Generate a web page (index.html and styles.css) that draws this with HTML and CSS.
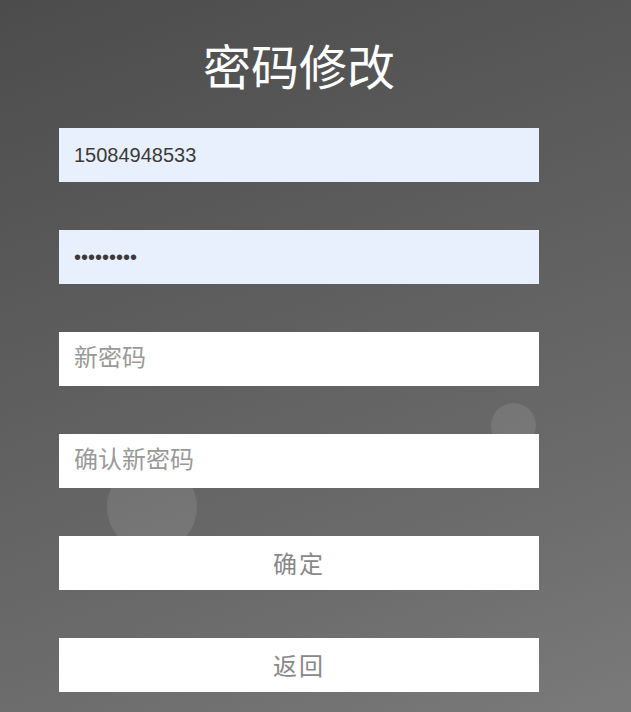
FILE: index.html
```html
<!DOCTYPE html>
<html lang="zh-CN">
<head>
<meta charset="utf-8">
<title>密码修改</title>
<link rel="stylesheet" href="styles.css">
</head>
<body>
<div class="bubble bubble-small"></div>
<div class="bubble bubble-big"></div>
<main class="panel">
  <h1 class="title">密码修改</h1>
  <form class="form">
    <input class="field field-filled" type="text" value="15084948533">
    <input class="field field-filled" type="password" value="123456789">
    <input class="field" type="password" placeholder="新密码">
    <input class="field" type="password" placeholder="确认新密码">
    <button class="btn" type="button">确定</button>
    <button class="btn" type="button">返回</button>
  </form>
</main>
</body>
</html>
```
FILE: styles.css
```css
html, body {
  margin: 0;
  padding: 0;
  height: 100%;
}
body {
  position: relative;
  overflow: hidden;
  background: linear-gradient(160deg, #4c4c4c 0%, #5f5f5f 45%, #6c6c6c 75%, #7a7a7a 100%);
  font-family: "Liberation Sans", "Noto Sans CJK SC", sans-serif;
}
.bubble {
  position: absolute;
  border-radius: 50%;
  background: rgba(255, 255, 255, 0.1);
}
.bubble-small {
  left: 491px;
  top: 403px;
  width: 45px;
  height: 45px;
}
.bubble-big {
  left: 107px;
  top: 462px;
  width: 90px;
  height: 90px;
}
.panel {
  position: relative;
  width: 480px;
  margin-left: 59px;
  padding-top: 32px;
}
.title {
  margin: 0 0 28px;
  height: 68px;
  line-height: 64px;
  text-align: center;
  color: #fff;
  font-family: "Noto Sans CJK SC", sans-serif;
  font-weight: 400;
  font-size: 48px;
}
.form {
  display: flex;
  flex-direction: column;
  gap: 48px;
}
.field, .btn {
  box-sizing: border-box;
  display: block;
  width: 480px;
  height: 54px;
  margin: 0;
  border: none;
  outline: none;
  background: #fff;
}
.field {
  padding: 0 15px;
  font-family: "Liberation Sans", "Noto Sans CJK SC", sans-serif;
  font-size: 20px;
  color: #3a3a3a;
}
.field-filled {
  background: #e8f0fe;
}
.field::placeholder {
  font-family: "Noto Sans CJK SC", sans-serif;
  font-size: 24px;
  color: #999;
}
.btn {
  padding: 0 0 2px;
  font-family: "Noto Sans CJK SC", sans-serif;
  font-size: 24px;
  letter-spacing: 2px;
  color: #888;
  cursor: pointer;
}
```
